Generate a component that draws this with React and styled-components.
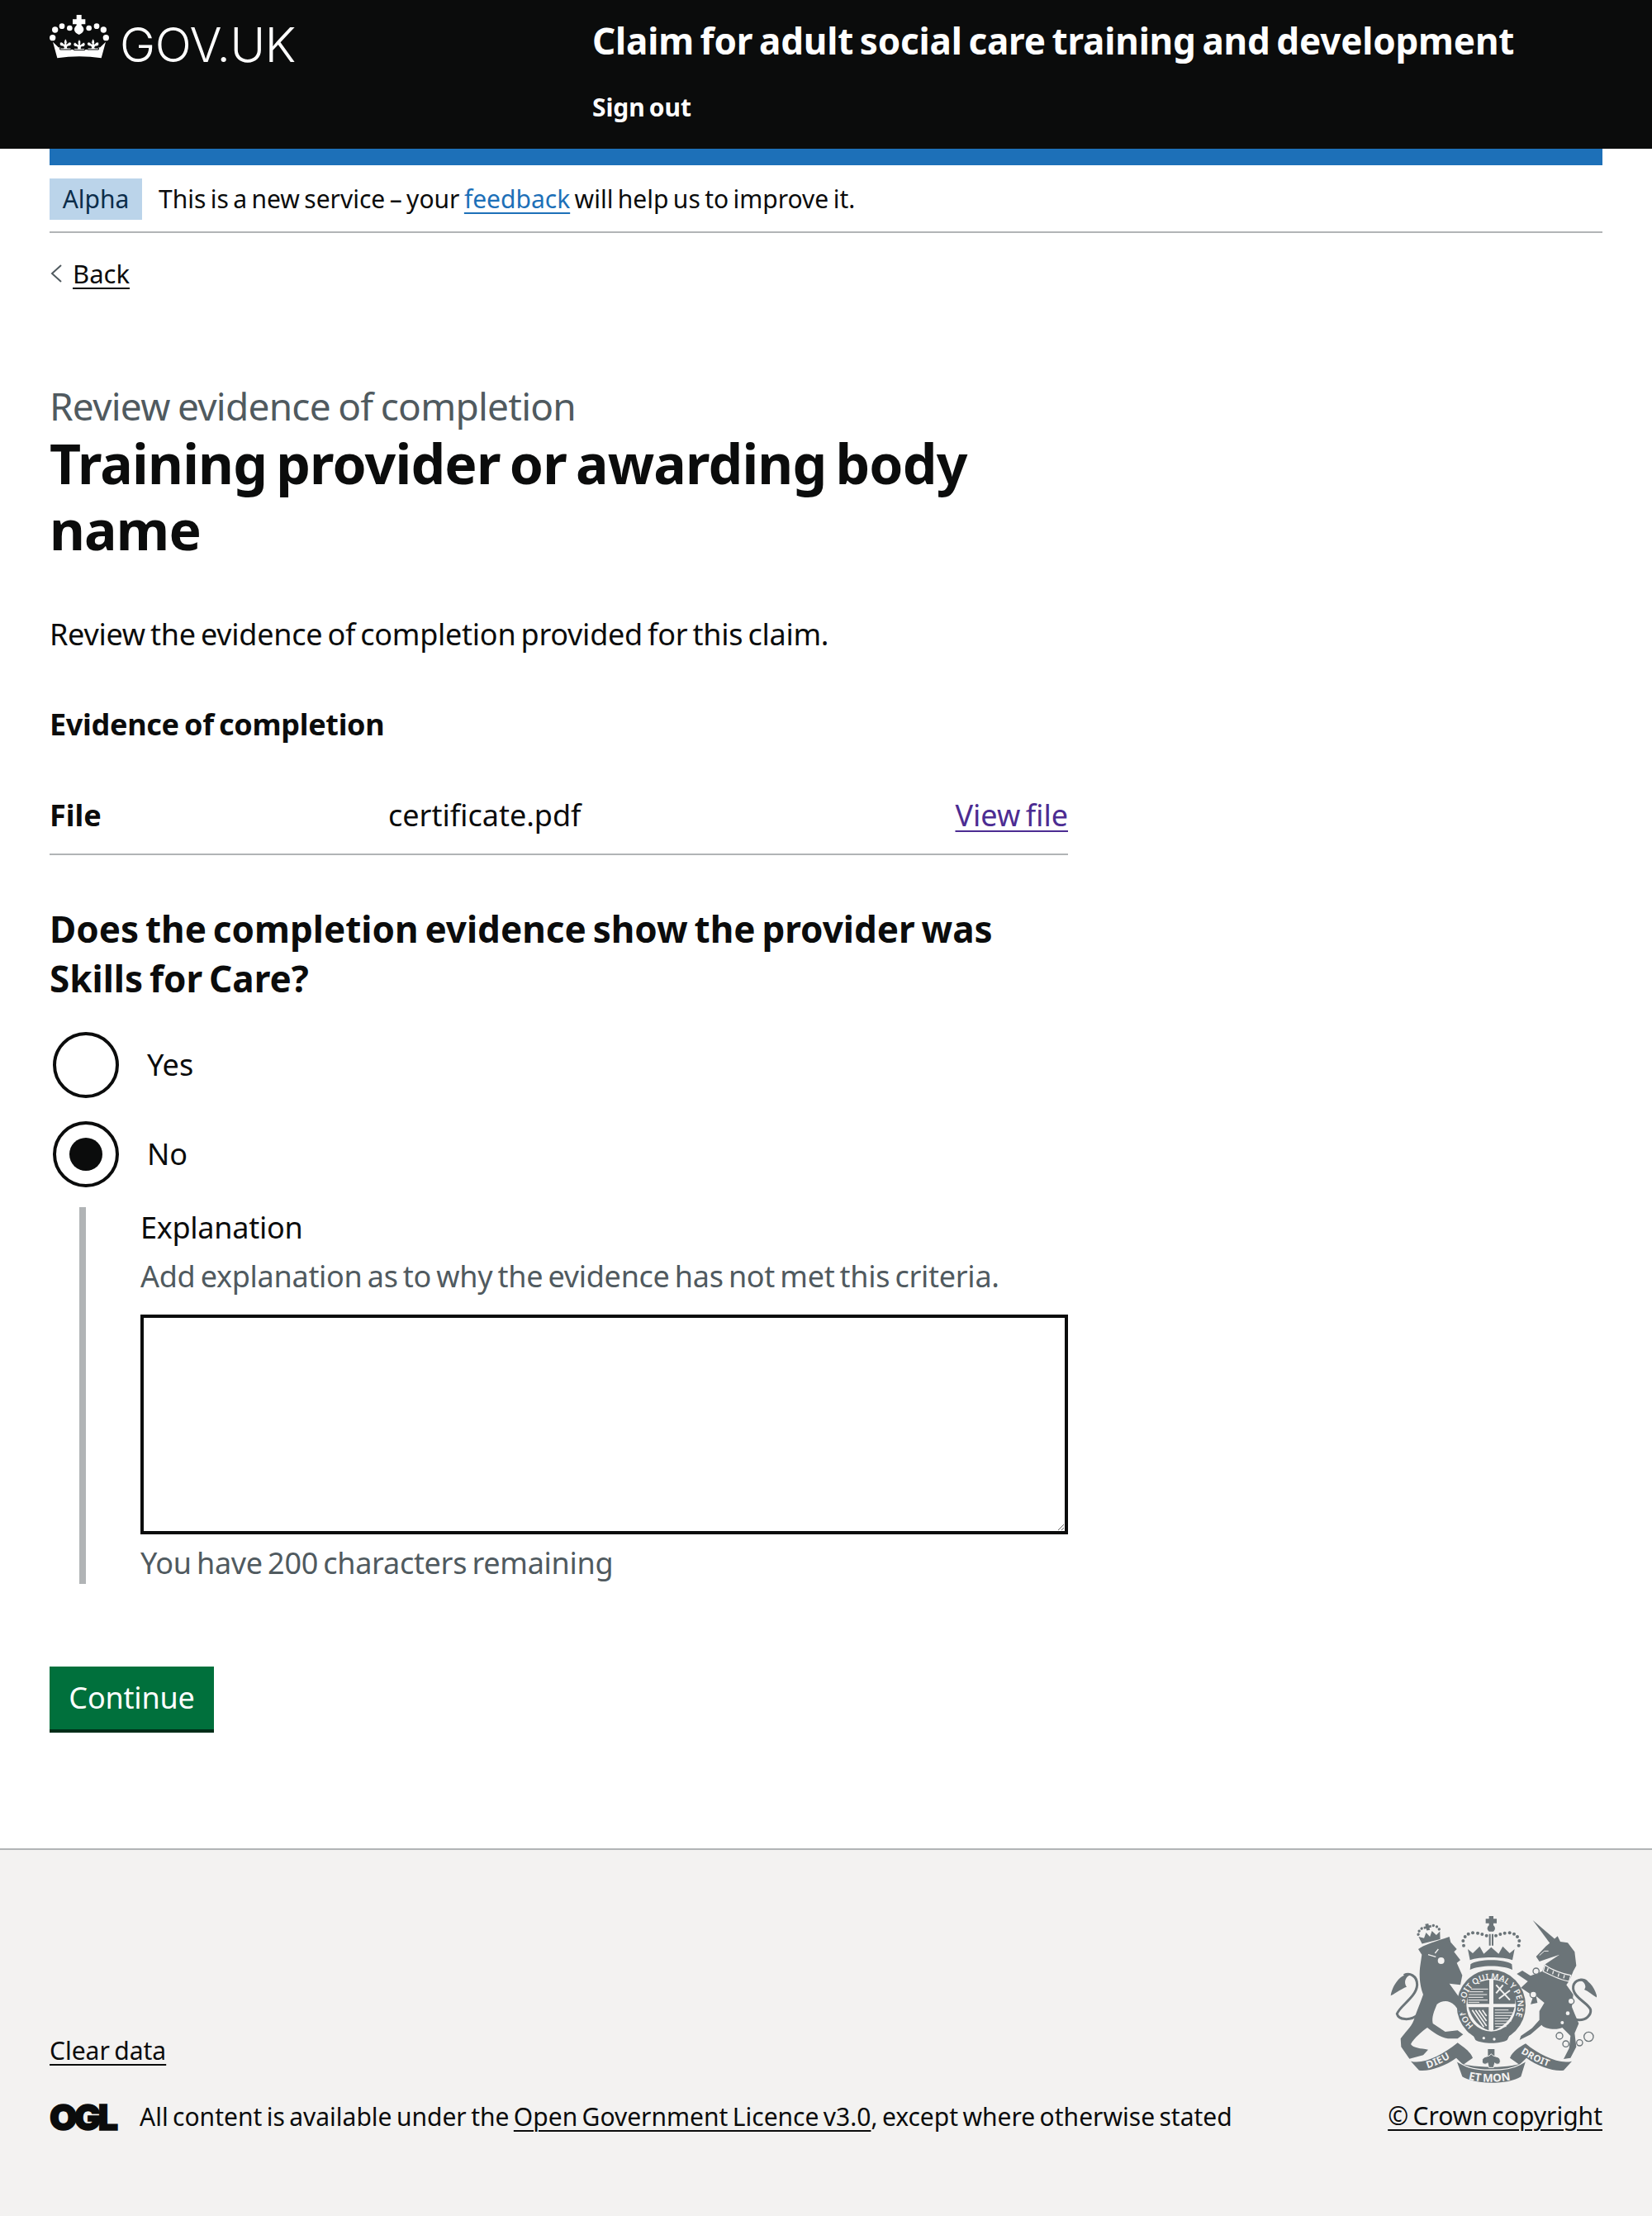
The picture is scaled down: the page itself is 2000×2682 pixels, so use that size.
import React from "react";
import styled, { createGlobalStyle } from "styled-components";

const Global = createGlobalStyle`
  html, body { margin: 0; padding: 0; background: #fff; }
  body { font-family: "Noto Sans", sans-serif; color: #0b0c0c; font-size: 36px; line-height: 48px; }
  * { box-sizing: border-box; word-spacing: -0.08em; }
`;

const Header = styled.header`
  background: #0b0c0c; height: 180px; padding: 0 60px; display: flex; color: #fff;
`;
const LogoCol = styled.div`
  width: 657px; display: flex; align-items: flex-start; padding-top: 17px; gap: 13px;
`;
const LogoText = styled.span`
  font-family: Inter, sans-serif; font-size: 58px; line-height: 72px; font-weight: 300; color: #fff; letter-spacing: -0.4px; margin-top: 1px;
`;
const ServiceCol = styled.div`display: flex; flex-direction: column; padding-top: 20px;`;
const ServiceName = styled.div`font-size: 44px; line-height: 58px; font-weight: 700; letter-spacing: -0.18px;`;
const SignOut = styled.div`font-size: 30px; line-height: 40px; font-weight: 700; margin-top: 32px; letter-spacing: -0.1px;`;

const Wrap = styled.div`margin: 0 60px;`;
const BlueBar = styled.div`height: 20px; background: #1d70b8;`;
const Phase = styled.div`
  display: flex; align-items: center; height: 82px; padding-top: 17px; padding-bottom: 15px;
  border-bottom: 2px solid #b1b4b6; gap: 20px; font-size: 30px; line-height: 40px;
`;
const Tag = styled.span`
  background: #bbd4ea; color: #0c2d4a; height: 50px; width: 112px; display: flex; align-items: center; justify-content: center;
`;
const Link = styled.a`
  color: ${p => p.$color || "inherit"}; text-decoration: underline; text-decoration-thickness: 2px; text-underline-offset: 5px;
`;
const BackRow = styled.div`
  display: flex; align-items: center; gap: 12px; margin-top: 29px; font-size: 31px; line-height: 40px;
`;
const Chevron = styled.svg`width: 16px; height: 26px;`;
const Main = styled.main`width: 1233px; padding-top: 114px;`;
const Caption = styled.div`
  color: #505a5f; font-size: 46px; line-height: 52px; letter-spacing: -0.75px;
  & { word-spacing: -0.04em; }
`;
const H1 = styled.h1`font-size: 66px; line-height: 80px; font-weight: 700; margin: 0; padding-top: 3px; width: 1233px; letter-spacing: -0.8px;`;
const Lead = styled.p`font-size: 36px; line-height: 48px; margin: 64px 0 0; letter-spacing: -0.27px;`;
const H2 = styled.h2`font-size: 36px; line-height: 48px; font-weight: 700; margin: 61px 0 0; letter-spacing: -0.3px;`;
const Row = styled.div`
  display: flex; align-items: center; margin-top: 61px; padding-bottom: 22px; height: 73px; border-bottom: 2px solid #b1b4b6; font-size: 36px;
`;
const Key = styled.div`width: 410px; font-weight: 700;`;
const Val = styled.div`flex: 1;`;
const Legend = styled.h2`font-size: 44px; line-height: 60px; font-weight: 700; margin: 59px 0 0;`;
const Radios = styled.div`display: flex; flex-direction: column; gap: 28px; margin-top: 35px;`;
const Radio = styled.div`
  display: flex; align-items: center; gap: 34px; height: 80px; font-size: 36px; padding-left: 4px;
`;
const Circle = styled.span`
  width: 80px; height: 80px; border-radius: 50%; border: 4px solid #0b0c0c; display: flex; align-items: center; justify-content: center;
  &::after { content: ""; width: 40px; height: 40px; border-radius: 50%; background: ${p => p.$on ? "#0b0c0c" : "transparent"}; }
`;
const Conditional = styled.div`
  margin: 24px 0 0 36px; border-left: 8px solid #b1b4b6; padding-left: 66px; display: flex; flex-direction: column; height: 456px; letter-spacing: -0.28px;
`;
const Label = styled.div`font-size: 36px; line-height: 48px; margin-top: 1px;`;
const Hint = styled.div`color: #505a5f; font-size: 36px; line-height: 48px; margin-top: 11px;`;
const Area = styled.textarea`
  display: block; flex: none; width: 1123px; height: 266px; border: 4px solid #0b0c0c; margin: 22px 0 0; padding: 0; background: #fff; border-radius: 0; outline: none;
`;
const Count = styled.div`color: #505a5f; font-size: 36px; line-height: 48px; margin-top: 11px;`;
const Btn = styled.div`
  margin-top: 100px; width: 199px; height: 76px; background: #00703c; color: #fff; box-shadow: 0 4px 0 #002d18; font-size: 36px;
  display: flex; align-items: center; justify-content: center; letter-spacing: -0.2px;
`;
const Footer = styled.footer`
  margin-top: 144px; height: 446px; background: #f3f2f1; border-top: 2px solid #b1b4b6; padding: 80px 60px 0; display: flex; justify-content: space-between; font-size: 30px; line-height: 40px;
`;
const FootLeft = styled.div`display: flex; flex-direction: column; align-items: flex-start; padding-top: 143px;`;
const OglRow = styled.div`display: flex; align-items: center; gap: 27px; margin-top: 40px;`;
const Ogl = styled.span`
  font-family: Inter, sans-serif; font-weight: 900; font-size: 43px; line-height: 40px; letter-spacing: -3.5px; width: 82px; -webkit-text-stroke: 1.5px #0b0c0c;
`;
const FootRight = styled.div`display: flex; flex-direction: column; align-items: flex-end;`;
const Arms = styled.svg`width: 250px; height: 206px; margin: 0 7px 16px 0;`;

const fleur = "M0 -36 C5 -28 8 -24 4 -16 L12 -22 C18 -26 24 -20 20 -12 C16 -8 12 -8 8 -8 L6 -2 L20 -2 L20 4 L-20 4 L-20 -2 L-6 -2 L-8 -8 C-12 -8 -16 -8 -20 -12 C-24 -20 -18 -26 -12 -22 L-4 -16 C-8 -24 -5 -28 0 -36Z";

const Crown = () => (
  <svg width="72" height="54" viewBox="60 50 216 160" fill="#fff" aria-hidden="true">
    <path d="M158 52h18v16h14v18h-14v4c12 10 12 24-9 34-21-10-21-24-9-34v-4h-14V68h14z" />
    <circle cx="71" cy="135" r="11"/><circle cx="80" cy="106" r="11"/><circle cx="105" cy="93" r="10"/><circle cx="133" cy="100" r="10"/>
    <circle cx="203" cy="100" r="10"/><circle cx="231" cy="93" r="10"/><circle cx="256" cy="106" r="11"/><circle cx="265" cy="135" r="11"/>
    <path d="M88 209 L72 150 L92 170 L102 172 L106 178 L230 178 L234 172 L244 170 L264 150 L248 209 C195 201 141 201 88 209Z" />
    <g fill="#fff" stroke="#0b0c0c" strokeWidth="3">
      <path transform="translate(118 174)" d={fleur} />
      <path transform="translate(168 176)" d={fleur} />
      <path transform="translate(218 174)" d={fleur} />
    </g>
  </svg>
);

const C = "#6b7478";
const L = "#f3f2f1";
const rings = [[660,285,11],[650,370,12],[787,394,11],[745,520,12],[768,549,11],[818,545,11],[851,523,17]];
const beads = [[397,192],[395,175],[402,160],[414,150],[430,146],[448,147],[464,151],[480,156],[597,192],[599,175],[592,160],[580,150],[564,146],[546,147],[530,151],[514,156]];

const ArmsLogo = () => (
  <Arms viewBox="130 85 750 618" fill={C} aria-hidden="true">
    <defs>
      <path id="ringText" d="M435 484 A96 96 0 1 1 559 484" />
      <path id="dieu" d="M266 638 C300 628 335 610 368 588" />
      <path id="droit" d="M604 582 C640 605 680 625 728 640" />
      <path id="etmon" d="M414 678 C460 690 530 690 584 676" />
    </defs>
    {/* crown */}
    <path d="M489 85h16v10h12v16h-12v8c8 6 8 16 0 22h-16c-8-6-8-16 0-22v-8h-12V95h12z" />
    {beads.map(([x, y]) => <circle key={`${x}-${y}`} cx={x} cy={y} r="6" />)}
    <path d="M489 150h6v42h-6zM499 150h6v42h-6z" />
    <path d="M420 245 L412 205 L430 220 L455 195 L470 222 L497 198 L524 222 L539 195 L564 220 L582 205 L574 245 C540 232 454 232 420 245Z" />
    <path d="M422 260 C450 240 544 240 572 260 L574 280 C540 262 454 262 420 280Z" />
    {/* garter ring and shield */}
    <ellipse cx="497" cy="410" rx="125" ry="130" />
    <ellipse cx="497" cy="408" rx="90" ry="96" fill={L} />
    <g fill={C}>
      <path d="M415 352 C430 330 470 318 490 317 V404 H412 C410 385 410 370 415 352Z" />
      <path d="M505 317 C530 318 565 330 580 352 C586 370 586 385 584 404 H505Z" />
      <path d="M414 416 H488 V500 C455 490 425 460 414 416Z" />
      <path d="M505 416 H582 C572 460 540 490 505 500Z" />
    </g>
    <g stroke={L} strokeWidth="3" fill="none">
      <path d="M424 350h62M418 360h50M416 370h66M414 380h54M414 390h70M414 398h40" />
      <path d="M510 446h64M510 456h50M510 466h60M510 476h48M512 486h40M510 436h66M510 426h50" />
      <path d="M515 335l50 55M540 335l-25 30M525 385l40-30" strokeWidth="6" />
      <path d="M428 426l42 62M440 426l40 58M452 426l28 40M465 426l15 22" strokeWidth="5" />
    </g>
    <text fill={L} fontFamily="Noto Sans, sans-serif" fontWeight="600" fontSize="30" letterSpacing="0.5">
      <textPath href="#ringText" startOffset="2">HONI SOIT QUI MAL Y PENSE</textPath>
    </text>
    <path d="M425 505 C450 530 545 530 570 505 L555 535 C530 550 465 550 440 535Z" />
    <circle cx="470" cy="528" r="5" fill={L} /><circle cx="508" cy="532" r="5" fill={L} />
    {/* lion */}
    <path d="M232 205 C250 190 300 175 345 160 L350 180 L372 205 L362 215 L385 245 L372 255 L392 300 L385 335 L345 330 L402 410 L408 440 L385 435 L365 410 C340 385 315 395 300 405 C290 430 280 450 285 475 L330 505 L375 500 L395 515 L375 530 L340 530 C310 525 285 505 265 490 C250 500 215 530 205 550 C215 565 240 565 268 570 L250 590 L200 603 L170 560 L168 530 C185 505 205 490 215 465 C230 420 240 400 250 370 C235 330 235 290 240 260 L245 225Z" />
    <path d="M268 225l28 8M305 205l-12 15" stroke={L} strokeWidth="4" fill="none" />
    <circle cx="315" cy="247" r="12" fill={L} />
    <path d="M235 440 C200 470 160 460 155 440 C165 410 225 380 228 335 C228 300 200 290 180 300" fill="none" stroke={C} strokeWidth="9" />
    <path d="M200 295 C170 296 140 330 132 374 C155 362 172 348 190 342 C178 326 186 306 200 300Z" />
    <g transform="rotate(-14 272 150)">
      <path d="M238 178 L232 150 L250 160 L262 142 L272 160 L284 142 L296 160 L312 150 L306 178Z" />
      <circle cx="233" cy="142" r="5"/><circle cx="239" cy="131" r="5"/><circle cx="250" cy="124" r="5"/><circle cx="294" cy="124" r="5"/><circle cx="305" cy="131" r="5"/><circle cx="311" cy="142" r="5"/>
      <path d="M266 112h12v24h-12zM258 120h28v8h-28z" />
    </g>
    {/* unicorn */}
    <path d="M648 100 L728 168 L712 186Z" />
    <path d="M660 232 L695 195 L725 170 L738 158 L748 178 L775 182 L800 215 L806 265 L795 285 L782 318 L770 335 L795 370 L790 415 L800 440 L815 475 L800 510 L806 560 L785 600 L760 604 L780 565 L785 520 L755 490 C735 500 690 495 680 480 L640 515 L600 535 L605 520 L645 492 L672 462 L672 430 L690 400 L660 375 L665 400 L640 405 L650 375 L605 345 L630 322 L590 295 L610 283 L640 302 L683 285 L690 262 L745 225 L700 240 L672 250Z" />
    <path d="M672 228 L690 212 L705 212" fill="none" stroke={L} strokeWidth="3" />
    <path d="M686 286 C710 298 750 318 780 322 L786 300 C760 296 715 280 692 262Z" stroke={L} strokeWidth="4" />
    <path d="M700 286l4-12M720 296l3-12M740 305l3-12M760 311l3-12" stroke={L} strokeWidth="4" fill="none" />
    <circle cx="775" cy="438" r="7" fill={L} /><circle cx="755" cy="472" r="6" fill={L} />
    {rings.map(([x, y, r]) => <circle key={`${x}-${y}`} cx={x} cy={y} r={r} fill={L} stroke={C} strokeWidth="4" />)}
    <path d="M800 460 C845 470 860 440 858 425 C850 400 790 380 795 340 C800 315 830 310 845 325" fill="none" stroke={C} strokeWidth="9" />
    <path d="M820 312 C850 312 875 345 882 382 C865 372 850 358 835 352 C845 340 835 322 820 318Z" />
    {/* motto ribbon */}
    <path d="M205 612 C250 625 320 590 375 545 C395 560 420 575 430 600 L395 625 L370 600 C330 630 270 650 235 645Z" />
    <path d="M790 612 C745 625 672 590 622 548 C602 560 575 575 565 600 L600 625 L625 600 C665 630 725 650 760 645Z" />
    <path d="M372 612 C410 640 585 640 622 612 L605 668 C560 698 440 698 392 668Z" />
    <path d="M372 612 L395 625 C440 650 555 650 600 625 L622 612" fill="none" stroke={L} strokeWidth="4" />
    <path d="M485 568h24v24h-24z" />
    <path d="M497 585 C505 600 530 590 530 612 C530 625 515 625 510 618 L506 635 H488 L484 618 C479 625 464 625 464 612 C464 590 489 600 497 585Z" stroke={L} strokeWidth="3" />
    <g fill={L} fontFamily="Noto Sans, sans-serif" fontWeight="700">
      <text fontSize="36" letterSpacing="1"><textPath href="#dieu">DIEU</textPath></text>
      <text fontSize="34" letterSpacing="1"><textPath href="#droit">DROIT</textPath></text>
      <text fontSize="40"><textPath href="#etmon">ET MON</textPath></text>
    </g>
  </Arms>
);

export default function App() {
  return (
    <>
      <Global />
      <Header>
        <LogoCol><Crown /><LogoText>GOV.UK</LogoText></LogoCol>
        <ServiceCol>
          <ServiceName>Claim for adult social care training and development</ServiceName>
          <SignOut>Sign out</SignOut>
        </ServiceCol>
      </Header>
      <Wrap>
        <BlueBar />
        <Phase>
          <Tag>Alpha</Tag>
          <span>This is a new service – your <Link $color="#1d70b8" href="#">feedback</Link> will help us to improve it.</span>
        </Phase>
        <BackRow>
          <Chevron viewBox="0 0 16 26"><path d="M14 3 3 13l11 10" fill="none" stroke="#505a5f" strokeWidth="2"/></Chevron>
          <Link href="#">Back</Link>
        </BackRow>
        <Main>
          <Caption>Review evidence of completion</Caption>
          <H1>Training provider or awarding body name</H1>
          <Lead>Review the evidence of completion provided for this claim.</Lead>
          <H2>Evidence of completion</H2>
          <Row><Key>File</Key><Val>certificate.pdf</Val><Link $color="#4c2c92" href="#">View file</Link></Row>
          <Legend>Does the completion evidence show the provider was Skills for Care?</Legend>
          <Radios>
            <Radio><Circle />Yes</Radio>
            <Radio><Circle $on />No</Radio>
          </Radios>
          <Conditional>
            <Label>Explanation</Label>
            <Hint>Add explanation as to why the evidence has not met this criteria.</Hint>
            <Area />
            <Count>You have 200 characters remaining</Count>
          </Conditional>
          <Btn>Continue</Btn>
        </Main>
      </Wrap>
      <Footer>
        <FootLeft>
          <Link href="#">Clear data</Link>
          <OglRow><Ogl>OGL</Ogl><span>All content is available under the <Link href="#">Open Government Licence v3.0</Link>, except where otherwise stated</span></OglRow>
        </FootLeft>
        <FootRight><ArmsLogo /><Link href="#">© Crown copyright</Link></FootRight>
      </Footer>
    </>
  );
}
